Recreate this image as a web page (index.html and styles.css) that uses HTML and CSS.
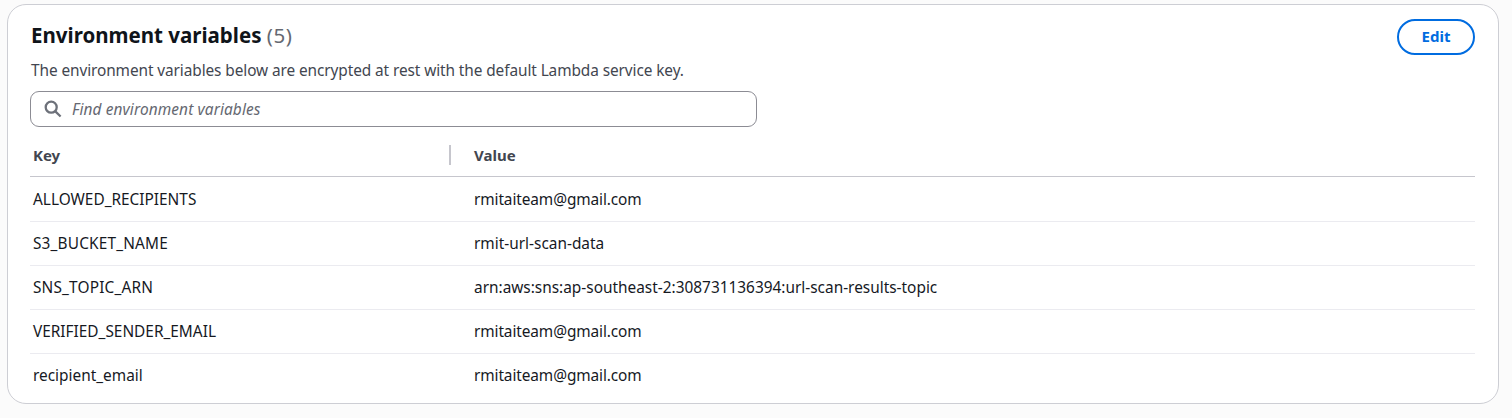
FILE: index.html
```html
<!DOCTYPE html>
<html lang="en">
<head>
<meta charset="utf-8">
<title>Environment variables</title>
<link rel="stylesheet" href="styles.css">
</head>
<body>
<section class="card">
  <header class="card-header">
    <div class="heading">
      <h2 class="title"><span class="title-text">Environment variables</span> <span class="count">(5)</span></h2>
      <p class="description">The environment variables below are encrypted at rest with the default Lambda service key.</p>
    </div>
    <button class="edit" type="button">Edit</button>
  </header>
  <div class="search">
    <svg class="search-icon" viewBox="0 0 18 18" fill="none" stroke="#6d717a" stroke-width="2.3"><circle cx="7.2" cy="7.2" r="5.5"/><path d="M11.1 11.1 16.6 16.5"/></svg>
    <span class="placeholder">Find environment variables</span>
  </div>
  <div class="table">
    <div class="row head"><div class="key">Key</div><div class="value">Value</div></div>
    <div class="row first"><div class="key">ALLOWED_RECIPIENTS</div><div class="value mail">rmitaiteam@gmail.com</div></div>
    <div class="row"><div class="key wide">S3_BUCKET_NAME</div><div class="value">rmit-url-scan-data</div></div>
    <div class="row"><div class="key wide">SNS_TOPIC_ARN</div><div class="value">arn:aws:sns:ap-southeast-2:308731136394:url-scan-results-topic</div></div>
    <div class="row"><div class="key">VERIFIED_SENDER_EMAIL</div><div class="value mail">rmitaiteam@gmail.com</div></div>
    <div class="row"><div class="key">recipient_email</div><div class="value mail">rmitaiteam@gmail.com</div></div>
  </div>
</section>
</body>
</html>
```
FILE: styles.css
```css
* { box-sizing: border-box; }
body {
  margin: 0;
  padding: 4px 13px 0 7px;
  height: 418px;
  overflow: hidden;
  background: #fbfbfb;
  color: #16191f;
  font: 15.4px/22px "Noto Sans", sans-serif;
}
.card {
  height: 400px;
  padding: 14px 23px 0 22px;
  border: 1px solid #cdced4;
  border-radius: 19px;
  background: #fff;
}
.card-header { display: flex; justify-content: space-between; height: 72px; }
.heading { padding-left: 1px; }
.title { margin: 3px 0 0; font-size: 20.5px; line-height: 26px; font-weight: 700; color: #0f141a; white-space: nowrap; }
.count { font-weight: 400; color: #656871; letter-spacing: 0.5px; }
.description { margin: 12px 0 0; color: #424650; line-height: 22px; white-space: nowrap; letter-spacing: -0.09px; }
.edit {
  width: 78px;
  height: 36px;
  padding: 0 0 2px;
  border: 2px solid #006ce0;
  border-radius: 18px;
  background: #fff;
  color: #006ce0;
  font: 700 15px/30px "Noto Sans", sans-serif;
}
.search {
  display: flex;
  align-items: center;
  width: 727px;
  height: 36px;
  padding: 0 13px;
  gap: 10px;
  border: 1px solid #8c8c94;
  border-radius: 9px;
}
.search-icon { width: 18px; height: 18px; }
.placeholder { color: #656871; font-style: italic; letter-spacing: 0.12px; line-height: 20px; padding-top: 1px; }
.table { margin-top: 7px; }
.row { display: flex; align-items: center; height: 44px; border-bottom: 1px solid #ebebf0; }
.row.first { height: 45px; padding-top: 2px; }
.row:last-child { border-bottom: 0; }
.row.head { height: 43px; border-bottom-color: #c6c6cd; color: #424650; font-size: 15px; font-weight: 700; }
.key { width: 421px; padding-left: 3px; }
.wide { letter-spacing: 0.17px; }
.value { padding-left: 23px; }
.mail { letter-spacing: -0.1px; }
.head .key { border-right: 2px solid #c6c6cd; line-height: 20px; }
```
